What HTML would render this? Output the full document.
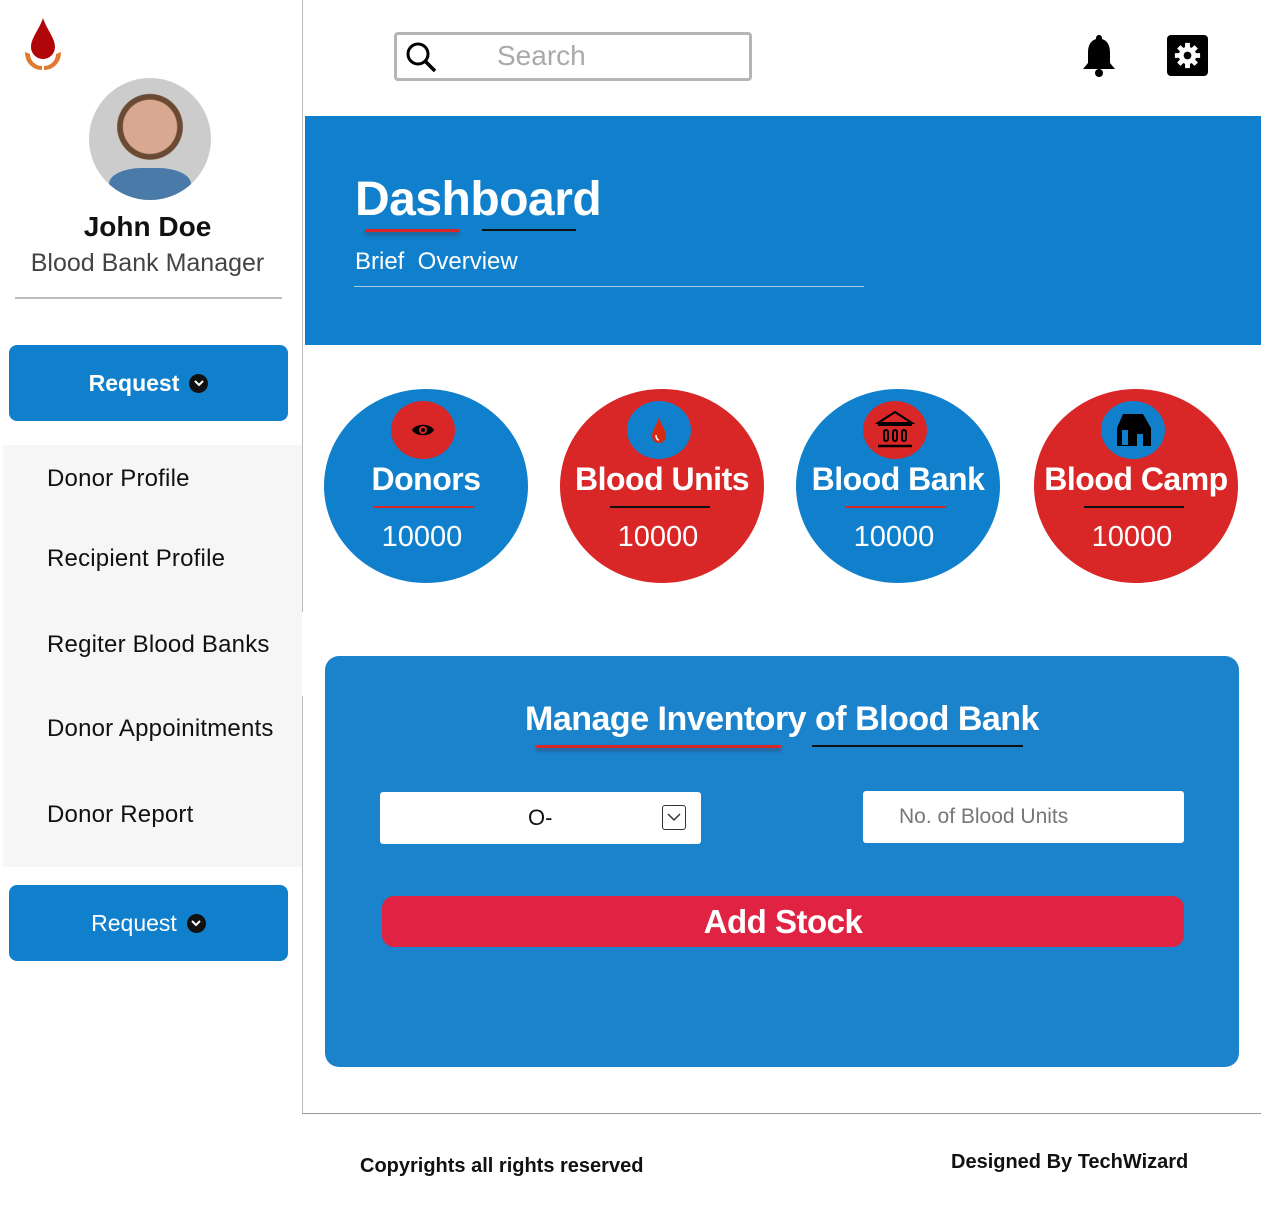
<!DOCTYPE html>
<html><head><meta charset="utf-8"><style>
*{margin:0;padding:0;box-sizing:border-box}
body{width:1261px;height:1219px;background:#fff;font-family:"Liberation Sans",sans-serif;position:relative;overflow:hidden}
.a{position:absolute}
.nav{position:absolute;left:3px;width:299px;background:#f6f6f6}
.ni{position:absolute;left:47px;font-size:24px;color:#111;letter-spacing:0.2px}
.btn{position:absolute;left:9px;width:279px;height:76px;background:#1180cc;border-radius:8px;color:#fff;font-size:23px;display:flex;align-items:center;justify-content:center;gap:10px}
.dot{width:19px;height:19px;border-radius:50%;background:#111;display:inline-flex;align-items:center;justify-content:center}
.circ{position:absolute;top:389px;width:204px;height:194px;border-radius:50%;color:#fff;text-align:center}
.circ .ic{position:absolute;left:67px;top:12px;width:64px;height:58px;border-radius:50%;display:flex;align-items:center;justify-content:center}
.circ .t{position:absolute;top:72px;width:100%;font-size:32px;font-weight:bold;letter-spacing:-0.5px}
.circ .l{position:absolute;top:117px;left:50px;width:100px;height:2px}
.circ .n{position:absolute;top:132px;width:100%;font-size:29px;margin-left:-4px}
.blue{background:#1180cc}.red{background:#d92626}
</style></head><body>
<div class="a" style="left:302px;top:0;width:1px;height:1114px;background:#bbb"></div>
<svg class="a" style="left:22px;top:16px" width="42" height="56" viewBox="0 0 42 56">
<path d="M21 2 C17 14 9 22 9 31 A12 12 0 0 0 33 31 C33 22 25 14 21 2Z" fill="#b0060a"/>
<path d="M3 36 C3 48 12 54 20 54 L20 50 C13 50 8 44 8 38Z M39 36 C39 48 30 54 22 54 L22 50 C29 50 34 44 34 38Z" fill="#e07a30"/>
</svg>
<div class="a" style="left:89px;top:78px;width:122px;height:122px;border-radius:50%;background:radial-gradient(circle at 50% 40%,#d8a890 0 28%,#6b4a34 29% 34%,#ccc 35%);overflow:hidden">
<div class="a" style="left:20px;top:90px;width:82px;height:40px;background:#4a7aa8;border-radius:40% 40% 0 0"></div></div>
<div class="a" style="left:0;top:211px;width:295px;text-align:center;font-size:28px;font-weight:bold;color:#111">John Doe</div>
<div class="a" style="left:0;top:249px;width:295px;text-align:center;font-size:25px;color:#444">Blood Bank Manager</div>
<div class="a" style="left:15px;top:297px;width:267px;height:2px;background:#bbb"></div>
<div class="btn" style="top:345px;font-weight:bold">Request <span class="dot"><svg width="10" height="7"><path d="M1 1L5 5L9 1" stroke="#fff" stroke-width="2" fill="none"/></svg></span></div>
<div class="nav" style="top:445px;height:422px"></div>
<div class="ni" style="top:465px">Donor Profile</div>
<div class="ni" style="top:545px">Recipient Profile</div>
<div class="a" style="left:302px;top:612px;width:2px;height:84px;background:#fff"></div>
<div class="ni" style="top:631px">Regiter Blood Banks</div>
<div class="ni" style="top:715px">Donor Appoinitments</div>
<div class="ni" style="top:801px">Donor Report</div>
<div class="btn" style="top:885px">Request <span class="dot"><svg width="10" height="7"><path d="M1 1L5 5L9 1" stroke="#fff" stroke-width="2" fill="none"/></svg></span></div>
<div class="a" style="left:394px;top:32px;width:358px;height:49px;border:3px solid #b5b5b5;border-radius:4px"></div>
<svg class="a" style="left:404px;top:40px" width="34" height="34" viewBox="0 0 34 34"><circle cx="14" cy="14" r="10" stroke="#000" stroke-width="3" fill="none"/><path d="M21 21L31 31" stroke="#000" stroke-width="3.5"/></svg>
<div class="a" style="left:497px;top:40px;font-size:28px;color:#aaa">Search</div>
<svg class="a" style="left:1081px;top:33px" width="36" height="44" viewBox="0 0 36 44"><path d="M18 2C15 2 15 5 15 6C9 8 7 13 7 20L7 30L2 36L34 36L29 30L29 20C29 13 27 8 21 6C21 5 21 2 18 2Z" fill="#000"/><circle cx="18" cy="40" r="4" fill="#000"/></svg>
<div class="a" style="left:1167px;top:35px;width:41px;height:41px;background:#000;border-radius:4px"></div>
<svg class="a" style="left:1172px;top:40px" width="31" height="31" viewBox="0 0 32 32"><g fill="#fff"><circle cx="16" cy="16" r="9"/><g stroke="#fff" stroke-width="5"><path d="M16 3V29M3 16H29M7 7L25 25M25 7L7 25"/></g></g><circle cx="16" cy="16" r="4" fill="#000"/></svg>
<div class="a blue" style="left:305px;top:116px;width:956px;height:229px"></div>
<div class="a" style="left:355px;top:172px;font-size:48px;font-weight:bold;color:#fff;letter-spacing:-0.5px">Dashboard</div>
<div class="a" style="left:365px;top:229px;width:94px;height:3px;background:#d92626;box-shadow:0 3px 3px #2a5a88"></div>
<div class="a" style="left:482px;top:229px;width:94px;height:2px;background:#111"></div>
<div class="a" style="left:355px;top:248px;font-size:24px;color:#fff">Brief&nbsp; Overview</div>
<div class="a" style="left:354px;top:286px;width:510px;height:1px;background:#a9cbe8"></div>
<div class="circ blue" style="left:324px"><div class="ic red"><svg width="26" height="18" viewBox="0 0 26 18"><path d="M2 9C6 2 20 2 24 9C20 16 6 16 2 9Z" fill="#000"/><circle cx="13" cy="9" r="4" fill="#d92626"/><circle cx="13" cy="9" r="2" fill="#000"/></svg></div><div class="t">Donors</div><div class="l red"></div><div class="n">10000</div></div>
<div class="circ red" style="left:560px"><div class="ic blue"><svg width="20" height="30" viewBox="0 0 20 30"><path d="M10 2C8 10 3 15 3 21A7 7 0 0 0 17 21C17 15 12 10 10 2Z" fill="#d82a10"/><path d="M7 20C7 24 9 25 10 25" stroke="#fff" stroke-width="1.5" fill="none"/></svg></div><div class="t">Blood Units</div><div class="l" style="background:#111"></div><div class="n">10000</div></div>
<div class="circ blue" style="left:796px"><div class="ic red"><svg width="40" height="42" viewBox="0 0 40 42"><path d="M3 14L20 3L37 14Z" stroke="#000" stroke-width="2" fill="none"/><path d="M3 16H37" stroke="#000" stroke-width="2"/><g stroke="#000" stroke-width="2" fill="none"><rect x="9" y="21" width="4" height="11" rx="2"/><rect x="18" y="21" width="4" height="11" rx="2"/><rect x="27" y="21" width="4" height="11" rx="2"/></g><path d="M3 37H37" stroke="#000" stroke-width="2.5"/></svg></div><div class="t">Blood Bank</div><div class="l red"></div><div class="n">10000</div></div>
<div class="circ red" style="left:1034px"><div class="ic blue"><svg width="40" height="36" viewBox="0 0 40 36"><path d="M10 2H30L38 16V34H30V22H24V34H4V16Z" fill="#000"/><rect x="9" y="18" width="6" height="15" fill="#1180cc"/></svg></div><div class="t">Blood Camp</div><div class="l" style="background:#111"></div><div class="n">10000</div></div>
<div class="a" style="left:325px;top:656px;width:914px;height:411px;background:#1b82cc;border-radius:14px"></div>
<div class="a" style="left:325px;top:700px;width:914px;text-align:center;font-size:34px;font-weight:bold;color:#fff;letter-spacing:-0.5px">Manage Inventory of Blood Bank</div>
<div class="a" style="left:536px;top:745px;width:245px;height:3px;background:#d92626;box-shadow:0 3px 3px #2a5a88"></div>
<div class="a" style="left:812px;top:745px;width:211px;height:2px;background:#111"></div>
<div class="a" style="left:380px;top:792px;width:321px;height:52px;background:#fff;border-radius:3px"></div>
<div class="a" style="left:528px;top:805px;font-size:22px;color:#111">O-</div>
<div class="a" style="left:662px;top:805px;width:24px;height:25px;border:1.5px solid #333;border-radius:3px"></div>
<svg class="a" style="left:666px;top:812px" width="16" height="10"><path d="M2 2L8 8L14 2" stroke="#333" stroke-width="1.5" fill="none"/></svg>
<div class="a" style="left:863px;top:791px;width:321px;height:52px;background:#fff;border-radius:3px"></div>
<div class="a" style="left:899px;top:805px;font-size:21px;color:#777">No. of Blood Units</div>
<div class="a" style="left:382px;top:896px;width:802px;height:51px;background:#e02342;border-radius:12px;color:#fff;font-size:33px;font-weight:bold;text-align:center;line-height:51px;letter-spacing:-0.5px">Add Stock</div>
<div class="a" style="left:302px;top:1113px;width:959px;height:1px;background:#999"></div>
<div class="a" style="left:360px;top:1155px;font-size:20px;font-weight:bold;color:#111">Copyrights all rights reserved</div>
<div class="a" style="left:951px;top:1151px;font-size:20px;font-weight:bold;color:#111">Designed By TechWizard</div>
</body></html>
